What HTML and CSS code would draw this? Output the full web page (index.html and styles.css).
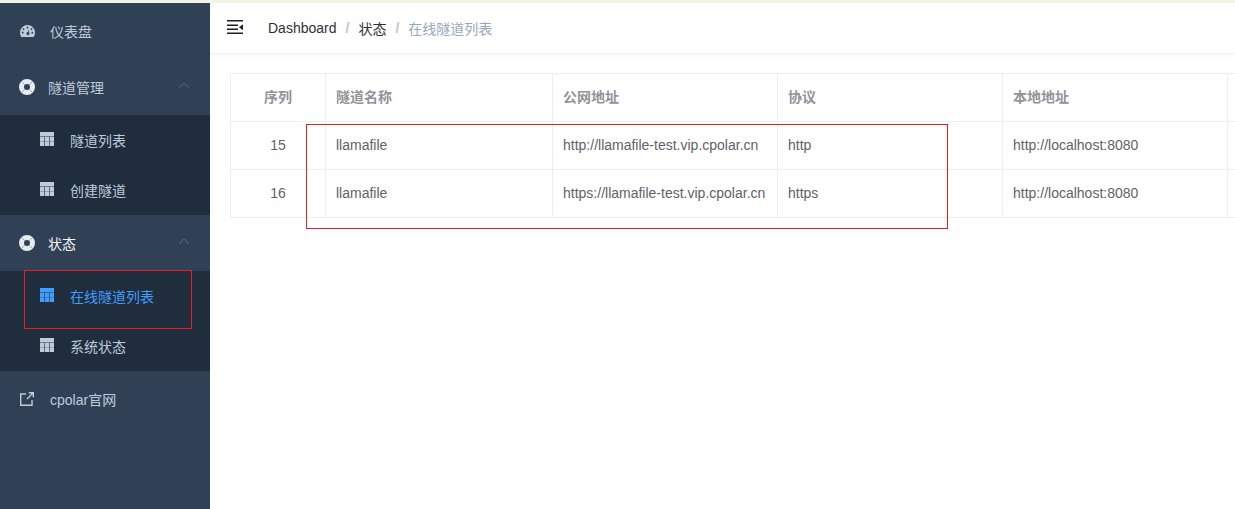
FILE: index.html
```html
<!DOCTYPE html>
<html lang="zh-CN">
<head>
  <meta charset="UTF-8">
  <meta name="viewport" content="width=device-width, initial-scale=1.0">
  <title>cpolar</title>
  <link rel="stylesheet" href="styles.css">
</head>
<body>
  <svg class="sprites" width="0" height="0">
    <symbol id="i-table" viewBox="0 0 14 14">
      <path d="M0 0h14v4.600H0zM0 5h4.400v4.200H0zM5 5h4v4.200H5zM9.600 5H14v4.200H9.600zM0 9.600h4.400V14H0zM5 9.600h4V14H5zM9.600 9.600H14V14H9.600z"/>
    </symbol>
    <symbol id="i-ring" viewBox="0 0 16 16">
      <path fill-rule="evenodd" d="M8 0a8 8 0 1 1 0 16A8 8 0 0 1 8 0zm0 5a3 3 0 1 0 0 6 3 3 0 0 0 0-6z"/>
      <path d="M2.400 2.400l3.400 3.400M13.600 2.400l-3.400 3.400M2.400 13.600l3.400-3.400M13.600 13.600l-3.400-3.400" fill="none" stroke="#8c9bb0" stroke-width=".8"/>
    </symbol>
    <symbol id="i-up" viewBox="0 0 12 7">
      <path d="M1 6l5-5 5 5" fill="none" stroke="currentColor" stroke-width="1"/>
    </symbol>
  </svg>

  <div class="topline"></div>

  <div class="app">
    <!-- menu laterale -->
    <aside class="sidebar">
      <div class="menu-item">
        <svg class="ico-dash" viewBox="0 0 15 12"><path fill-rule="evenodd" d="M7.500 0A7.500 7.500 0 0 1 15 7.500c0 1.700-.5 3.200-1.400 4.500H1.400C.5 10.700 0 9.200 0 7.500A7.500 7.500 0 0 1 7.500 0zM6.700 1.800v1.700h1.600V1.800zM3.500 3l-1.100 1.100 1.200 1.200 1.100-1.100zm8 0l-1.200 1.200 1.100 1.100 1.200-1.200zM1.800 6.800v1.600h1.700V6.800zm9.700 0v1.600h1.700V6.800zM8.900 4.600L7.700 6.900a1.600 1.600 0 1 0 1.200.3z"/></svg>
        <span class="dash-label">仪表盘</span>
      </div>

      <div class="menu-head">
        <svg class="ico-ring"><use href="#i-ring"/></svg>
        <span>隧道管理</span>
        <svg class="ico-up"><use href="#i-up"/></svg>
      </div>
      <div class="submenu">
        <div class="sub-item"><svg class="ico-table"><use href="#i-table"/></svg><span>隧道列表</span></div>
        <div class="sub-item"><svg class="ico-table"><use href="#i-table"/></svg><span>创建隧道</span></div>
      </div>

      <div class="menu-head open">
        <svg class="ico-ring"><use href="#i-ring"/></svg>
        <span>状态</span>
        <svg class="ico-up"><use href="#i-up"/></svg>
      </div>
      <div class="submenu">
        <div class="sub-item active"><svg class="ico-table"><use href="#i-table"/></svg><span>在线隧道列表</span></div>
        <div class="sub-item"><svg class="ico-table"><use href="#i-table"/></svg><span>系统状态</span></div>
      </div>

      <div class="menu-item">
        <svg class="ico-link" viewBox="0 0 14 14"><path d="M6 2H.7v11.300H12V8M7 7l6-6M8.800.7h4.500v4.500" fill="none" stroke="currentColor" stroke-width="1.400"/></svg>
        <span class="dash-label">cpolar官网</span>
      </div>
    </aside>

    <main class="main">
      <header class="navbar">
        <svg class="ico-fold" viewBox="0 0 16 14"><path d="M0 0h16v1.500H0zM0 4.500h11v1.500H0zM0 8.500h11v1.500H0zM0 12.500h16V14H0zM12 7.200l4-3v6z"/></svg>
        <nav class="crumbs">
          <span class="crumb">Dashboard</span>
          <span class="sep">/</span>
          <span class="crumb">状态</span>
          <span class="sep">/</span>
          <span class="crumb last">在线隧道列表</span>
        </nav>
      </header>

      <section class="content">
        <table class="tunnels">
          <thead>
            <tr>
              <th class="col-id">序列</th>
              <th class="col-name">隧道名称</th>
              <th class="col-url">公网地址</th>
              <th class="col-url">协议</th>
              <th class="col-url">本地地址</th>
              <th class="col-rest"></th>
            </tr>
          </thead>
          <tbody>
            <tr>
              <td class="num">15</td>
              <td>llamafile</td>
              <td>http://llamafile-test.vip.cpolar.cn</td>
              <td>http</td>
              <td>http://localhost:8080</td>
              <td></td>
            </tr>
            <tr>
              <td class="num">16</td>
              <td>llamafile</td>
              <td>https://llamafile-test.vip.cpolar.cn</td>
              <td>https</td>
              <td>http://localhost:8080</td>
              <td></td>
            </tr>
          </tbody>
        </table>
      </section>
    </main>
  </div>

  <!-- riquadri rossi sopra lo screenshot -->
  <div class="mark mark-row"></div>
  <div class="mark mark-menu"></div>
</body>
</html>
```

FILE: styles.css
```css
html, body {
  margin: 0;
  height: 100%;
  overflow: hidden;
}

body {
  background-color: #fff;
  font-family: "Liberation Sans", "Noto Sans CJK SC", sans-serif;
  font-size: 14px;
}

.sprites {
  position: absolute;
}

.topline {
  height: 3px;
  background-color: #f1f3e4;
}

.app {
  display: flex;
  height: 506px;
}

/* menu laterale */
.sidebar {
  flex: 0 0 210px;
  background-color: #304156;
  color: #bfcbd9;
}

.menu-item,
.menu-head {
  display: flex;
  align-items: center;
  height: 56px;
  padding-left: 20px;
}

.menu-item {
  padding-bottom: 1px;
  box-sizing: border-box;
}

.dash-label {
  margin-left: 16px;
}

.ico-dash {
  width: 15px;
  height: 12px;
  margin-right: -1px;
  fill: #bfcbd9;
}

.ico-link {
  width: 14px;
  height: 14px;
  color: #bfcbd9;
}

.ico-ring {
  width: 16px;
  height: 16px;
  margin-left: -1px;
  margin-right: 13px;
  fill: #e8ebf0;
}

.ico-up {
  width: 12px;
  height: 7px;
  margin-left: auto;
  margin-right: 20px;
  margin-bottom: 3px;
  color: #5b6b7e;
}

.menu-head span {
  position: relative;
  top: -0.5px;
}

.menu-head.open {
  color: #f4f4f5;
}

.submenu {
  background-color: #1f2d3d;
}

.sub-item {
  display: flex;
  align-items: center;
  height: 50px;
  padding-left: 40px;
}

.ico-table {
  width: 14px;
  height: 14px;
  margin-right: 16px;
  margin-bottom: 2px;
  fill: #bfcbd9;
}

.sub-item.active {
  color: #409eff;
}

.sub-item.active .ico-table {
  fill: #409eff;
}

/* barra in alto */
.main {
  flex: 1;
  min-width: 0;
  overflow: hidden;
}

.navbar {
  display: flex;
  align-items: center;
  height: 50px;
  padding-left: 17px;
  background-color: #fff;
  box-shadow: 0 1px 4px rgba(0, 21, 41, 0.08);
}

.ico-fold {
  width: 16px;
  height: 14px;
  margin-right: 25px;
  margin-bottom: 2px;
  fill: #1f2024;
}

.crumbs {
  display: flex;
  align-items: center;
  color: #303133;
  margin-bottom: 1px;
}

.sep {
  margin: 0 9px;
  color: #c0c4cc;
  font-weight: bold;
}

.crumb.last {
  color: #97a8be;
}

/* tabella */
.content {
  padding: 20px;
}

.tunnels {
  border-collapse: collapse;
  table-layout: fixed;
  width: 1100px;
  color: #606266;
}

.tunnels th,
.tunnels td {
  height: 45px;
  padding: 0 10px 2px;
  border: 1px solid #ebeef5;
  text-align: left;
  box-sizing: content-box;
  white-space: nowrap;
}

.tunnels th {
  height: 43px;
  padding-bottom: 4px;
  color: #909399;
  font-weight: bold;
}

.col-id { width: 74px; }
.col-name { width: 206px; }
.col-url { width: 204px; }
.col-rest { width: 100px; }

.tunnels th.col-id,
.tunnels td.num {
  text-align: center;
}

/* riquadri rossi */
.mark {
  position: absolute;
  border: 1px solid #ed1c24;
  box-sizing: border-box;
}

.mark-row {
  left: 306px;
  top: 124px;
  width: 642px;
  height: 105px;
}

.mark-menu {
  left: 24px;
  top: 270px;
  width: 168px;
  height: 59px;
}
```
